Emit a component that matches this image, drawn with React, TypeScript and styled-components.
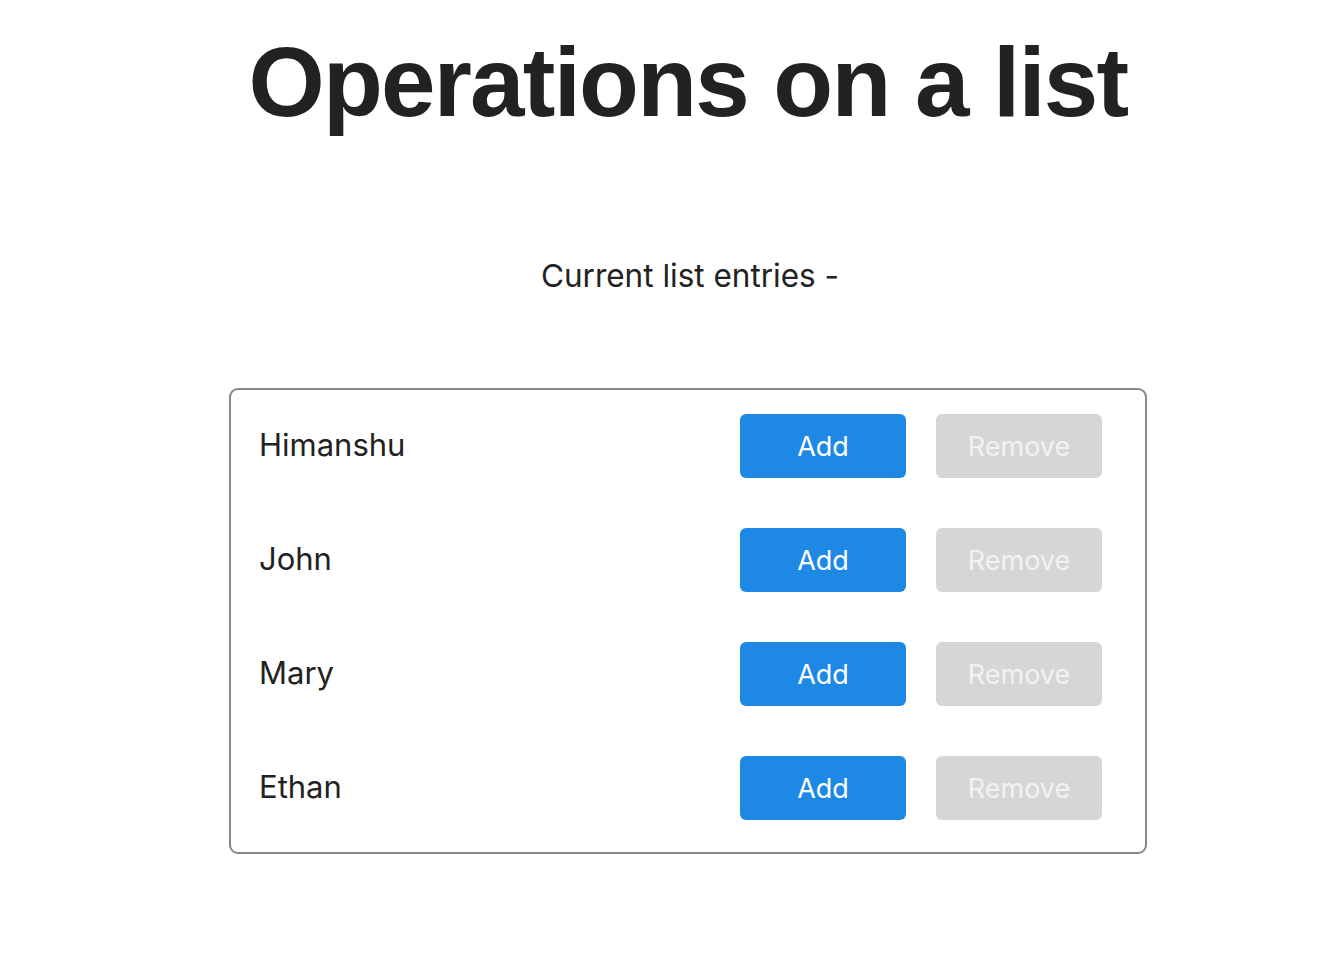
import React from 'react';
import styled, { createGlobalStyle } from 'styled-components';

const GlobalStyle = createGlobalStyle`
  html, body {
    margin: 0;
    padding: 0;
    background: #ffffff;
  }

  body {
    font-family: Inter, 'Liberation Sans', Arial, sans-serif;
    color: #222222;
  }
`;

const Page = styled.div`
  display: flex;
  justify-content: center;
  padding: 0 0 0 50px;
`;

const Column = styled.main`
  width: 918px;
  display: flex;
  flex-direction: column;
  align-items: center;
`;

const Title = styled.h1`
  margin: 25px 0 0;
  font-family: 'Liberation Sans', Arial, sans-serif;
  font-size: 98px;
  font-weight: 700;
  line-height: 114px;
  letter-spacing: -1.8px;
  white-space: nowrap;
`;

const Subtitle = styled.p`
  margin: 119px 0 0 4px;
  font-size: 31.5px;
  line-height: 36px;
  font-weight: 400;
`;

const ListBox = styled.ul`
  list-style: none;
  align-self: stretch;
  margin: 94px 0 0;
  padding: 24px 43px 32px 28px;
  border: 2px solid #888888;
  border-radius: 9px;
  display: flex;
  flex-direction: column;
  gap: 50px;
`;

const Row = styled.li`
  display: flex;
  align-items: center;
  gap: 30px;
`;

const Name = styled.span`
  flex: 1;
  font-size: 31px;
  line-height: 36px;
  margin-top: -2px;
`;

interface ActionButtonProps {
  $disabled?: boolean;
}

const ActionButton = styled.button<ActionButtonProps>`
  width: 166px;
  height: 64px;
  border: none;
  border-radius: 6px;
  font-family: Inter, 'Liberation Sans', Arial, sans-serif;
  font-size: 27px;
  background: ${({ $disabled = false }) => ($disabled ? '#d6d6d6' : '#1e88e5')};
  color: ${({ $disabled = false }) => ($disabled ? '#f2f2f2' : '#ffffff')};
  cursor: ${({ $disabled = false }) => ($disabled ? 'default' : 'pointer')};
`;

const entries = ['Himanshu', 'John', 'Mary', 'Ethan'];

const App = () => (
  <>
    <GlobalStyle />
    <Page>
      <Column>
        <Title>Operations on a list</Title>
        <Subtitle>Current list entries -</Subtitle>
        <ListBox>
          {entries.map((name) => (
            <Row key={name}>
              <Name>{name}</Name>
              <ActionButton type="button">Add</ActionButton>
              <ActionButton type="button" $disabled>
                Remove
              </ActionButton>
            </Row>
          ))}
        </ListBox>
      </Column>
    </Page>
  </>
);

export default App;
